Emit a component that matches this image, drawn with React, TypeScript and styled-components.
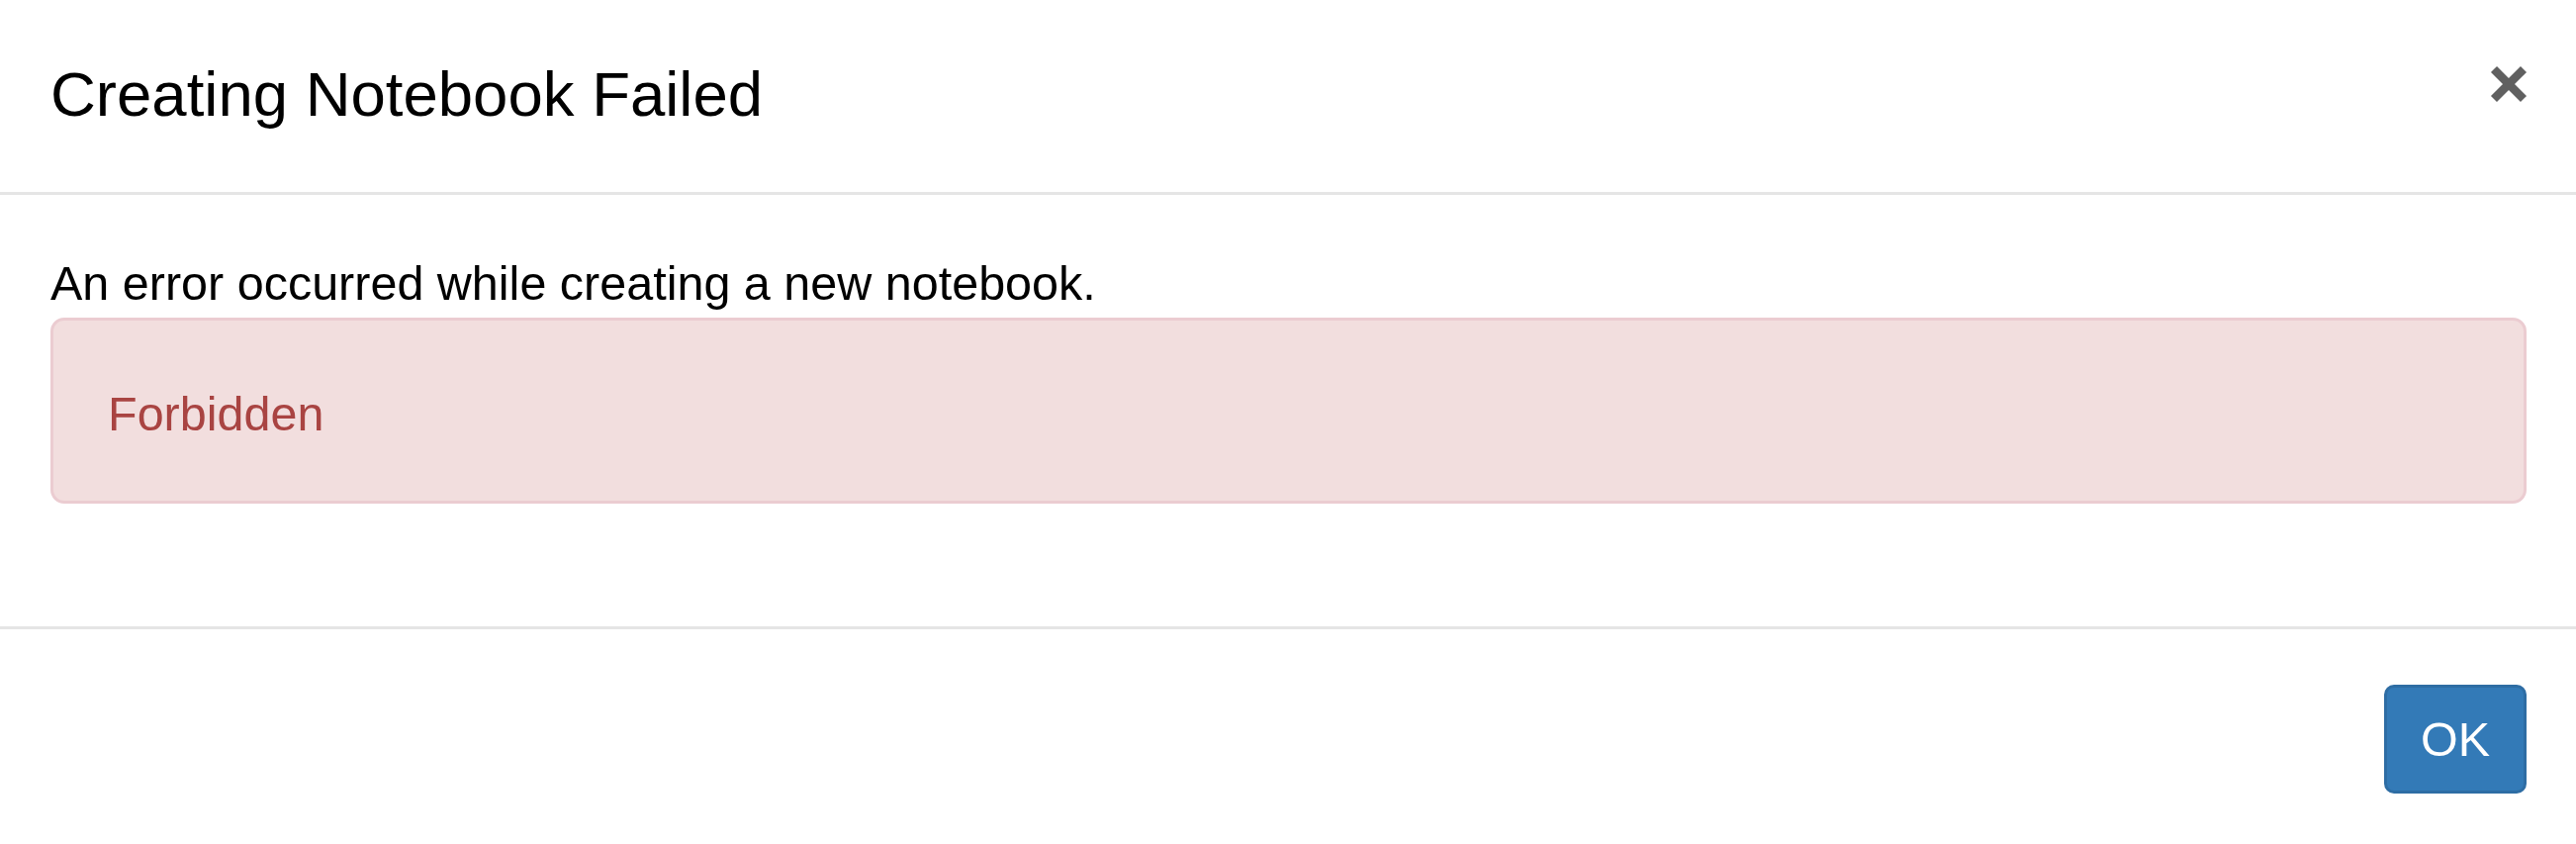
import React from 'react'
import styled, { createGlobalStyle } from 'styled-components'

const GlobalStyle = createGlobalStyle`
  html, body {
    margin: 0;
    padding: 0;
    background: #fff;
  }
  body {
    font-family: 'Liberation Sans', Arial, Helvetica, sans-serif;
    color: #000;
  }
`

const Modal = styled.div`
  width: 2604px;
  height: 853px;
  background: #fff;
  display: flex;
  flex-direction: column;
  overflow: hidden;
`

const Header = styled.div`
  display: flex;
  justify-content: space-between;
  align-items: flex-start;
  padding: 50px 49px 54px 51px;
  border-bottom: 3px solid #e5e5e5;
`

const Title = styled.h4`
  margin: 0;
  font-weight: 400;
  font-size: 63.5px;
  line-height: 90px;
`

const CloseButton = styled.button`
  width: 38px;
  height: 38px;
  margin-top: 16px;
  padding: 0;
  border: none;
  background: none;
  cursor: pointer;

  svg {
    display: block;
  }
`

const Body = styled.div`
  padding: 54px 50px 124px 51px;
  display: flex;
  flex-direction: column;
`

const Message = styled.p`
  margin: 0;
  font-size: 48.5px;
  line-height: 70px;
  height: 70px;
`

const Alert = styled.div`
  height: 188px;
  box-sizing: border-box;
  display: flex;
  align-items: center;
  padding: 6px 52px 0 55px;
  background: #f2dede;
  border: 3px solid #ebccd1;
  border-radius: 14px;
  color: #a94442;
  font-size: 48.5px;
  line-height: 70px;
`

const Footer = styled.div`
  display: flex;
  justify-content: flex-end;
  padding: 56px 50px 0;
  border-top: 3px solid #e5e5e5;
`

const PrimaryButton = styled.button`
  width: 144px;
  height: 110px;
  box-sizing: border-box;
  padding: 0;
  border: 3px solid #2e6da4;
  border-radius: 10px;
  background: #337ab7;
  color: #fff;
  font-family: 'Liberation Sans', Arial, Helvetica, sans-serif;
  font-size: 48.5px;
  line-height: 1;
  cursor: pointer;
`

const CloseIcon = () => (
  <svg width="38" height="38" viewBox="0 0 38 38">
    <path d="M4 4 L34 34 M34 4 L4 34" stroke="#606060" strokeWidth="8.5" strokeLinecap="butt" />
  </svg>
)

export default function App() {
  return (
    <>
      <GlobalStyle />
      <Modal>
        <Header>
          <Title>Creating Notebook Failed</Title>
          <CloseButton aria-label="Close">
            <CloseIcon />
          </CloseButton>
        </Header>
        <Body>
          <Message>An error occurred while creating a new notebook.</Message>
          <Alert>Forbidden</Alert>
        </Body>
        <Footer>
          <PrimaryButton>OK</PrimaryButton>
        </Footer>
      </Modal>
    </>
  )
}
